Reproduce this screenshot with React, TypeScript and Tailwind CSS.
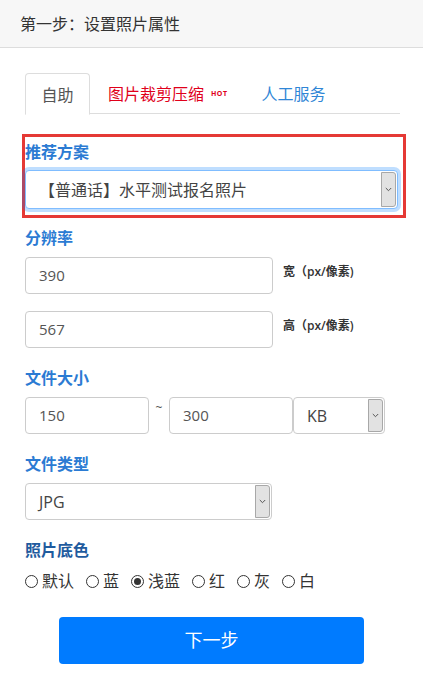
import React from 'react';

const font = "font-['Open_Sans','Noto_Sans_CJK_SC',sans-serif]";

function Chevron() {
  return (
    <svg width="7" height="5" viewBox="0 0 7 5" fill="none">
      <path d="M0.8 1 L3.5 3.7 L6.2 1" stroke="#555" strokeWidth="1" />
    </svg>
  );
}

function FakeSelect({
  value,
  className,
  focused = false,
}: {
  value: string;
  className: string;
  focused?: boolean;
}) {
  return (
    <div
      className={
        'flex items-stretch rounded-[4px] bg-white ' +
        (focused
          ? 'border border-[#80bdff] shadow-[0_0_0_3px_rgba(0,123,255,0.25)] '
          : 'border border-[#ccc] ') +
        className
      }
    >
      <div className="flex flex-1 items-center pl-[13px] text-[16px] text-[#444]">{value}</div>
      <div className="my-[1px] mr-[1px] flex w-[15px] items-center justify-center rounded-r-[3px] border border-[#a8a8a8] bg-[#e2e2e2]">
        <Chevron />
      </div>
    </div>
  );
}

function TextInput({ value, className }: { value: string; className: string }) {
  return (
    <div
      className={
        'flex items-center rounded-[4px] border border-[#ccc] bg-white pl-[13px] text-[15px] text-[#555] ' +
        className
      }
    >
      {value}
    </div>
  );
}

function Label({ children, dark = false }: { children: React.ReactNode; dark?: boolean }) {
  return (
    <div
      className={
        'h-[20px] text-[16px] leading-[20px] font-bold ' + (dark ? 'text-[#1f5b9e]' : 'text-[#2b7bd3]')
      }
    >
      {children}
    </div>
  );
}

function Radio({ label, checked = false }: { label: string; checked?: boolean }) {
  return (
    <label className="flex items-center gap-[4px]">
      <span className="flex h-[13px] w-[13px] items-center justify-center rounded-full border border-[#333] bg-white">
        {checked && <span className="h-[7px] w-[7px] rounded-full bg-[#333]" />}
      </span>
      <span className="text-[16px] leading-[20px] text-[#333]">{label}</span>
    </label>
  );
}

export default function App() {
  return (
    <div className={'min-h-[689px] w-[423px] bg-white ' + font}>
      <div className="flex h-[48px] items-center border-b border-[#ddd] bg-[#f7f7f7] px-[20px] text-[16px] text-[#333]">
        第一步：设置照片属性
      </div>

      <div className="pr-[23px] pl-[25px]">
        <div className="mt-[25px] flex h-[41px] border-b border-[#ddd]">
          <div className="-mb-px flex h-[42px] w-[65px] items-center justify-center rounded-t-[4px] border border-b-white border-[#ddd] bg-white pt-[2px] text-[16px] text-[#555]">
            自助
          </div>
          <div className="flex items-center pt-[2px] pr-[17px] pl-[18px]">
            <span className="text-[16px] text-[#e0001a]">图片裁剪压缩</span>
            <span className="ml-[7px] text-[7px] font-bold tracking-[0.5px] text-[#e0001a]">HOT</span>
          </div>
          <div className="flex items-center pt-[2px] pl-[17px] text-[16px] text-[#2f86d6]">人工服务</div>
        </div>
      </div>

      <div className="px-[25px]">
        <div className="-ml-[3px] mt-[20px] mr-[-8px] border-[3px] border-[#e53935] pt-[5px] pr-[5px] pb-[6px]">
          <Label>推荐方案</Label>
          <FakeSelect value="【普通话】水平测试报名照片" className="mt-[8px] h-[39px]" focused />
        </div>

        <div className="mt-[10px]">
          <Label>分辨率</Label>
        </div>
        <div className="mt-[9px] flex items-start">
          <TextInput value="390" className="h-[37px] w-[248px]" />
          <span className="mt-[6px] ml-[10px] text-[12px] font-semibold text-[#333]">宽（px/像素)</span>
        </div>
        <div className="mt-[17px] flex items-start">
          <TextInput value="567" className="h-[37px] w-[248px]" />
          <span className="mt-[6px] ml-[10px] text-[12px] font-semibold text-[#333]">高（px/像素)</span>
        </div>

        <div className="mt-[20px]">
          <Label>文件大小</Label>
        </div>
        <div className="mt-[9px] flex items-start">
          <TextInput value="150" className="h-[37px] w-[124px]" />
          <span className="w-[20px] pt-[4px] text-center text-[12px] leading-[14px] text-[#555]">~</span>
          <TextInput value="300" className="h-[37px] w-[124px]" />
          <FakeSelect value="KB" className="h-[37px] w-[92px]" />
        </div>

        <div className="mt-[20px]">
          <Label>文件类型</Label>
        </div>
        <FakeSelect value="JPG" className="mt-[9px] h-[37px] w-[247px]" />

        <div className="mt-[20px]">
          <Label dark>照片底色</Label>
        </div>
        <div className="mt-[11px] flex items-center gap-[12px]">
          <Radio label="默认" />
          <Radio label="蓝" />
          <Radio label="浅蓝" checked />
          <Radio label="红" />
          <Radio label="灰" />
          <Radio label="白" />
        </div>

        <button className="mx-auto mt-[26px] flex h-[47px] w-[305px] items-center justify-center rounded-[4px] bg-[#007bff] text-[18px] text-white">
          下一步
        </button>
      </div>
    </div>
  );
}
